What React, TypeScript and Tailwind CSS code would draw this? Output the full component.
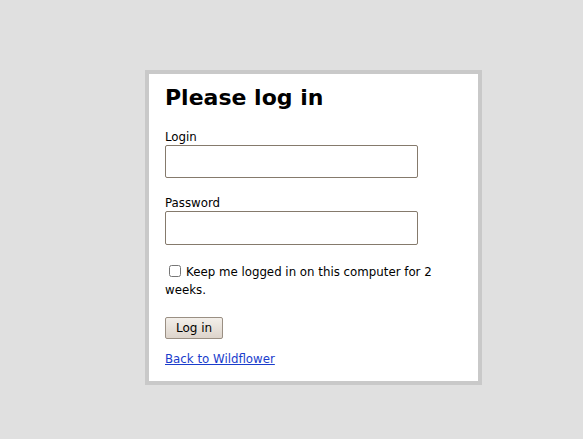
export default function App() {
  return (
    <div className="min-h-[439px] bg-[#e0e0e0] pt-[70px] text-[11.8px] text-black" style={{ fontFamily: '"DejaVu Sans", Verdana, sans-serif' }}>
      <div className="ml-[145px] w-[337px] border-4 border-[#c9c9c9] bg-white px-[16px] pb-[14px] pt-[10px]">
        <h1 className="text-[22px] font-bold leading-[28px]">Please log in</h1>
        <form className="mt-[18px]" onSubmit={(e) => e.preventDefault()}>
          <label className="block leading-[15px]">Login</label>
          <input className="block h-[33px] w-[253px] rounded-[2px] border border-[#857a6c] bg-white" />
          <label className="mt-[18px] block leading-[15px]">Password</label>
          <input type="password" className="block h-[34px] w-[253px] rounded-[2px] border border-[#857a6c] bg-white" />
          <div className="mt-[18px] w-[290px] leading-[18px]">
            <input type="checkbox" className="relative top-[1px] ml-[4px] mr-[5px] h-[12px] w-[12px] align-baseline" />
            Keep me logged in on this computer for 2 weeks.
          </div>
          <button className="mt-[18px] block h-[22px] rounded-[2px] border border-[#9a8f83] bg-gradient-to-b from-[#f3efea] to-[#ddd4cb] px-[10px] text-[12px] leading-[18px]">
            Log in
          </button>
        </form>
        <a href="#" className="mt-[12px] block leading-[16px] text-[#1a3dcc] underline">Back to Wildflower</a>
      </div>
    </div>
  );
}
